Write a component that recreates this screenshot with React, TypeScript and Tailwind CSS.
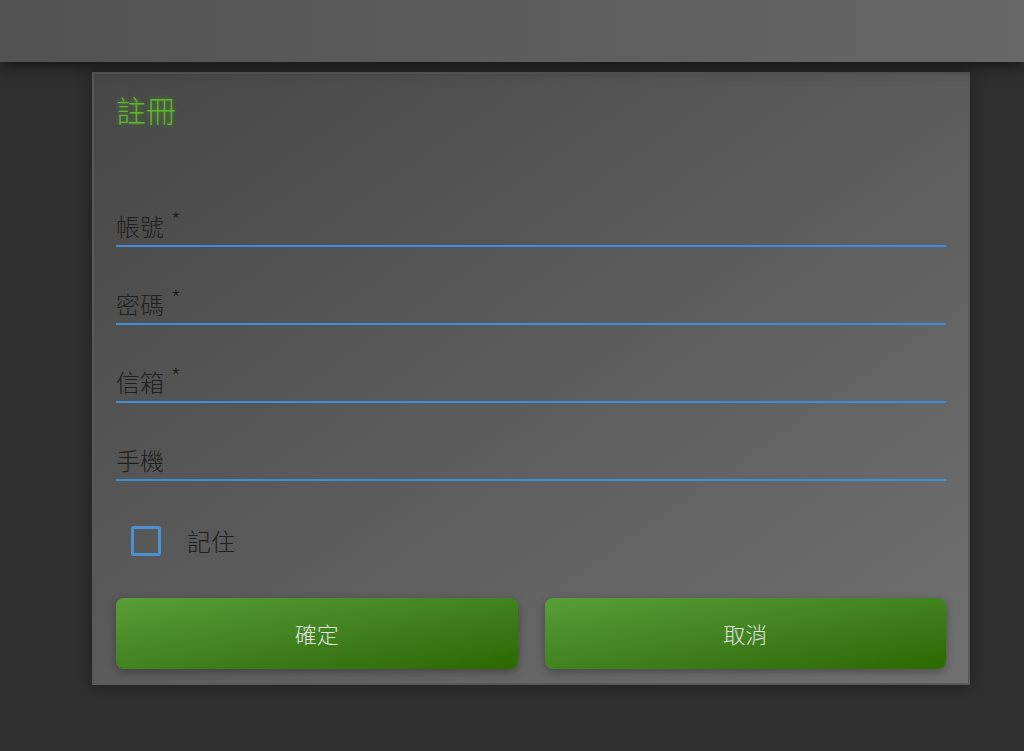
import React from "react";

const font = { fontFamily: '"Noto Sans CJK TC", "Noto Sans", sans-serif' };

function Field({ label, required }: { label: string; required?: boolean }) {
  return (
    <div className="h-[78px] flex flex-col justify-end">
      <div className="h-[30px] mb-[4px] flex items-center text-[24px] leading-[30px] font-light text-[#202020]">
        <span>{label}</span>
        {required && <span className="text-[22px] leading-none self-start -mt-[3px] ml-[7px]">*</span>}
      </div>
      <div className="h-[2px] bg-[#3f8ed6]" />
    </div>
  );
}

export default function App() {
  return (
    <div className="w-[1024px] h-[751px] bg-[#2f2f2f] overflow-hidden" style={font}>
      <div className="h-[62px] bg-gradient-to-r from-[#525252] to-[#676767] shadow-[0_4px_14px_rgba(0,0,0,0.55)] relative z-10" />
      <div className="ml-[92px] mt-[10px] w-[878px] h-[613px] border-2 border-[#595959] bg-gradient-to-br from-[#474747] to-[#717171] shadow-[0_0_14px_rgba(0,0,0,0.35)] px-[22px] pt-[17px]">
        <div className="h-[36px] text-[30px] leading-[36px] font-light text-[#5cb82a] [text-shadow:0_0_5px_rgba(92,184,42,0.55)]">
          註冊
        </div>
        <div className="mt-[42px]">
          <Field label="帳號" required />
          <Field label="密碼" required />
          <Field label="信箱" required />
          <Field label="手機" />
        </div>
        <div className="mt-[36px] h-[48px] flex items-center pl-[15px]">
          <div className="w-[30px] h-[30px] border-[3px] border-[#4a92d4] rounded-[3px]" />
          <span className="ml-[26px] text-[24px] leading-[30px] font-light text-[#202020]">記住</span>
        </div>
        <div className="mt-[33px] flex gap-[27px]">
          <button className="flex-1 h-[71px] rounded-[8px] bg-gradient-to-br from-[#589e36] to-[#2b6900] shadow-[0_3px_8px_rgba(0,0,0,0.3)] text-[22px] font-light text-[#e0e0e0]">
            確定
          </button>
          <button className="flex-1 h-[71px] rounded-[8px] bg-gradient-to-br from-[#589e36] to-[#2b6900] shadow-[0_3px_8px_rgba(0,0,0,0.3)] text-[22px] font-light text-[#e0e0e0]">
            取消
          </button>
        </div>
      </div>
    </div>
  );
}
